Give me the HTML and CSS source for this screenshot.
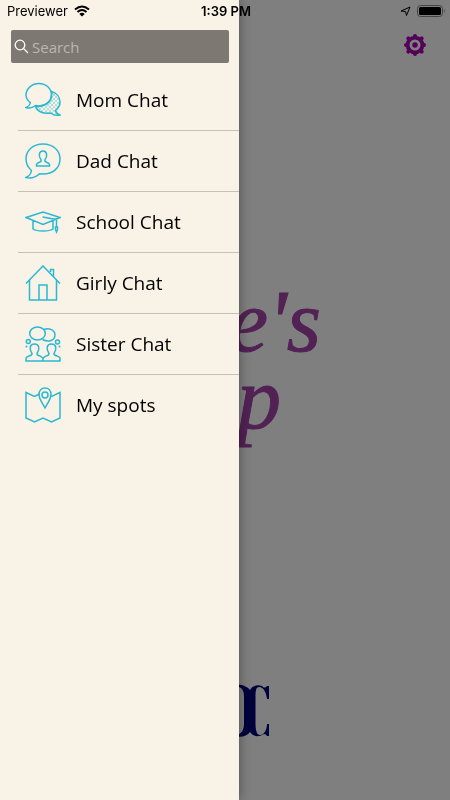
FILE: index.html
```html
<!DOCTYPE html>
<html lang="en">
<head>
<meta charset="utf-8">
<meta name="viewport" content="width=device-width, initial-scale=1">
<title>Chat menu</title>
<link rel="stylesheet" href="styles.css">
</head>
<body>
<main class="page">
  <div class="toolbar">
    <button class="settings" type="button" aria-label="Settings">
      <svg width="24" height="24" viewBox="0 0 24 24">
        <g stroke="currentColor" stroke-width="4" stroke-linecap="round">
          <path d="M12 3v18M3 12h18M5.300 5.300l13.400 13.400M18.700 5.300L5.300 18.700"/>
        </g>
        <circle cx="12" cy="12" r="9.300" fill="currentColor"/>
        <circle cx="12" cy="12" r="5.500" fill="#fff"/>
        <circle cx="12" cy="12" r="2.700" fill="currentColor"/>
      </svg>
    </button>
  </div>
  <h1 class="title"><span class="title-line">e's</span><span class="title-line title-end">p</span></h1>
  <svg class="monogram" width="38" height="54" viewBox="0 0 38 54" aria-hidden="true">
    <path d="M4 1C10 0 16 2 19 6C21 2 26 0 31 2C33 4 34 4 36 2H38V15H36C35 7 32 3 28 3C25 3 24.500 7 24.500 13V39C24.500 47 26 51 29 51C33 51 36 46 36 40H38V52H36Q35 50 33 50C26 54 22 52 19 48C16 52 10 54 4 52C11 50 13 46 13 39V13C13 6 11 3 4 2Z"/>
  </svg>
</main>
<div class="shade"></div>

<aside class="drawer">
  <label class="search">
    <svg width="15" height="15" viewBox="0 0 15 15" aria-hidden="true"><circle cx="6" cy="6" r="4.8"/><path d="M9.5 9.5L14 14"/></svg>
    <input type="search" placeholder="Search" aria-label="Search">
  </label>
  <nav>
    <ul class="menu">
      <li><a href="#mom">
        <svg class="icon" viewBox="0 0 36 36">
          <defs><pattern id="dots" width="4" height="4" patternUnits="userSpaceOnUse"><circle cx="1" cy="1" r=".7"/><circle cx="3" cy="3" r=".7"/></pattern></defs>
          <path class="dotted" d="M26.500 9.500C32 11 35 15.500 35 20C35 23.500 33 26.500 30.500 28.500C31 30.500 32.500 32 35 33C31 34 27.500 32.500 25.500 31C18 32.500 12 29 10.500 24.500C20 25 28 19 26.500 9.500Z"/>
          <path d="M14 1.500C21 1.500 26.500 6.500 26.500 13C26.500 19.500 21 24 14 24Q12 24 10.500 23.500C7.500 26 4 26.500 1 25.500C3.500 24.500 5 22.500 5.300 20.500C2.500 18.500 1 16 1 13C1 6.500 7 1.500 14 1.500Z"/>
        </svg>Mom Chat</a></li>
      <li><a href="#dad">
        <svg class="icon" viewBox="0 0 36 36">
          <path d="M18 1C28 1 35 7.500 35 16C35 25 28 31 18 31Q16 31 14.500 30.700C10.500 34.500 5 35.500 1 34.500C4.500 33 6 30.500 6.500 27.500C3 24.500 1 20.500 1 16C1 7.500 8 1 18 1Z"/>
          <path d="M11.500 23V21.500Q12 20 15 19Q16.500 18.500 16 16.500C13.500 14 13.500 8 18 8C22.500 8 22.500 14 20 16.500Q19.500 18.500 21 19Q24 20 24.500 21.500V23Z"/>
        </svg>Dad Chat</a></li>
      <li><a href="#school">
        <svg class="icon" viewBox="0 0 36 36">
          <path d="M1 13.500L18 8L35 13.500L18 20.500ZM8 17V25Q11 27 18 27Q25 27 28 25V17M17.500 13L31.500 15.500V23M30.500 23H32.500V25.500L31.500 28L30.500 25.500Z"/>
        </svg>School Chat</a></li>
      <li><a href="#girly">
        <svg class="icon" viewBox="0 0 36 36">
          <path d="M1 18.500L18 1L35 18.500M4.500 15V35H31.500V15M14 35V20H22V35M25.500 7V4.500H28.500V11.500"/>
        </svg>Girly Chat</a></li>
      <li><a href="#sister">
        <svg class="icon" viewBox="0 0 36 36">
          <ellipse cx="12.500" cy="7.500" rx="7.800" ry="6.500"/>
          <path d="M19 3.500C24 1.500 30 4 30 9C30 14 24 17 17.500 13.500"/>
          <circle cx="3.300" cy="15.500" r="2"/><circle cx="32.500" cy="16" r="2"/>
          <circle class="solid" cx="1.500" cy="20.500" r="1"/><circle class="solid" cx="34.500" cy="20.500" r="1"/>
          <path d="M1 35V32.500Q1 31 4 30Q7 29.500 7 27.500C4 23 4.500 18 9.500 18C14.500 18 15 23 12 27.500Q12 29.500 15 30L18 32L21 30Q24 29.500 24 27.500C21 23 21.500 18 26.500 18C31.500 18 32 23 29 27.500Q29 29.500 32 30Q35 31 35 32.500V35ZM18 32V35"/>
        </svg>Sister Chat</a></li>
      <li><a href="#spots">
        <svg class="icon" viewBox="0 0 36 36">
          <path d="M14.500 7L9.500 9.500L1 5.500V31L9.500 35L18 31L26.500 35L35 31V5.500L26.500 9.500L25 8.500"/>
          <path d="M20 21C17 15.500 14 12 14 7.500C14 3.500 16.500 1 20 1C23.500 1 26 3.500 26 7.500C26 12 23 15.500 20 21Z"/>
          <circle cx="20" cy="8" r="3"/>
        </svg>My spots</a></li>
    </ul>
  </nav>
</aside>

<header class="status">
  <div class="carrier">Previewer
    <svg width="16" height="12" viewBox="0 0 16 12" aria-label="Wi-Fi"><path class="arc" d="M1 4.500Q8-1.500 15 4.500M3.500 7Q8 3 12.500 7"/><path d="M8 11.500L5.300 8.900Q8 6.700 10.700 8.900Z"/></svg>
  </div>
  <time class="clock">1:39 PM</time>
  <div class="power">
    <svg width="11" height="11" viewBox="0 0 11 11" aria-label="Location"><path class="line" d="M10 1L6.500 9.500L5.500 5.500L1 5Z"/></svg>
    <svg width="28" height="12" viewBox="0 0 28 12" aria-label="Battery"><rect class="case" x=".5" y=".5" width="25" height="11" rx="3"/><rect x="2" y="2" width="22" height="8" rx="1.500"/><path class="tip" d="M27 4Q28.500 6 27 8Z"/></svg>
  </div>
</header>
</body>
</html>
```
FILE: styles.css
```css
* {
  box-sizing: border-box;
}

body {
  margin: 0;
  min-height: 100vh;
  background: #fff;
  color: #000;
  font-family: "Open Sans", "Noto Sans", sans-serif;
}

.page {
  display: flex;
  flex-direction: column;
  min-height: 100vh;
  padding: 33px 23px 62px;
}

.toolbar {
  display: flex;
  justify-content: flex-end;
}

.settings {
  width: 24px;
  height: 24px;
  padding: 0;
  border: 0;
  background: none;
  color: #a800b4;
}

.settings svg {
  display: block;
}

.title {
  display: flex;
  flex-direction: column;
  align-items: flex-end;
  margin: 226px 106px 0 0;
  color: #a444a8;
  font: italic 88px/77px "Liberation Serif", serif;
  -webkit-text-stroke: 1px #a444a8;
}

.title-end {
  padding-right: 40px;
}

.monogram {
  align-self: center;
  margin-top: auto;
  margin-left: 50px;
  fill: #000078;
}

.shade {
  position: fixed;
  inset: 0;
  background: rgba(0, 0, 0, 0.5);
}

.drawer {
  position: fixed;
  inset: 0 auto 0 0;
  width: calc(50% + 14px);
  padding-top: 30px;
  background: #f9f2e6;
  box-shadow: 0 0 12px rgba(0, 0, 0, 0.4);
}

.search {
  display: flex;
  align-items: center;
  gap: 3px;
  height: 33px;
  margin: 0 10px 7px 11px;
  padding: 0 3px;
  border-radius: 2px;
  background: #7d7972;
}

.search svg {
  flex: none;
  fill: none;
  stroke: #fff;
  stroke-width: 1.3;
}

.search input {
  flex: 1;
  min-width: 0;
  padding: 0;
  border: 0;
  outline: 0;
  background: none;
  color: #fff;
  font: 15px "Open Sans", "Noto Sans", sans-serif;
}

.search input::placeholder {
  color: #b9b6b0;
}

.menu {
  margin: 0;
  padding: 0 0 0 18px;
  list-style: none;
}

.menu li {
  border-bottom: 1px solid #c5c1b8;
}

.menu li:last-child {
  border-bottom: 0;
}

.menu a {
  display: flex;
  align-items: center;
  gap: 15px;
  height: 60px;
  padding-left: 7px;
  color: #000;
  font-size: 19px;
  text-decoration: none;
}

.icon {
  width: 36px;
  height: 36px;
  fill: none;
  stroke: #2bb9d2;
  stroke-width: 1.5;
}

.icon pattern circle,
.icon .solid {
  fill: #2bb9d2;
  stroke: none;
}

.icon .dotted {
  fill: url(#dots);
}

.status {
  position: fixed;
  inset: 0 0 auto;
  display: grid;
  grid-template-columns: 1fr auto 1fr;
  align-items: center;
  height: 22px;
  padding: 0 5px 0 7px;
  font: 13px "Inter", sans-serif;
}

.carrier,
.power {
  display: flex;
  align-items: center;
  gap: 6px;
}

.power {
  justify-content: flex-end;
}

.clock {
  font-weight: 600;
}

.status .arc {
  fill: none;
  stroke: #000;
  stroke-width: 2;
}

.status .line {
  fill: none;
  stroke: #000;
}

.status .case {
  fill: none;
  stroke: #444;
}

.status .tip {
  fill: #444;
}
```
